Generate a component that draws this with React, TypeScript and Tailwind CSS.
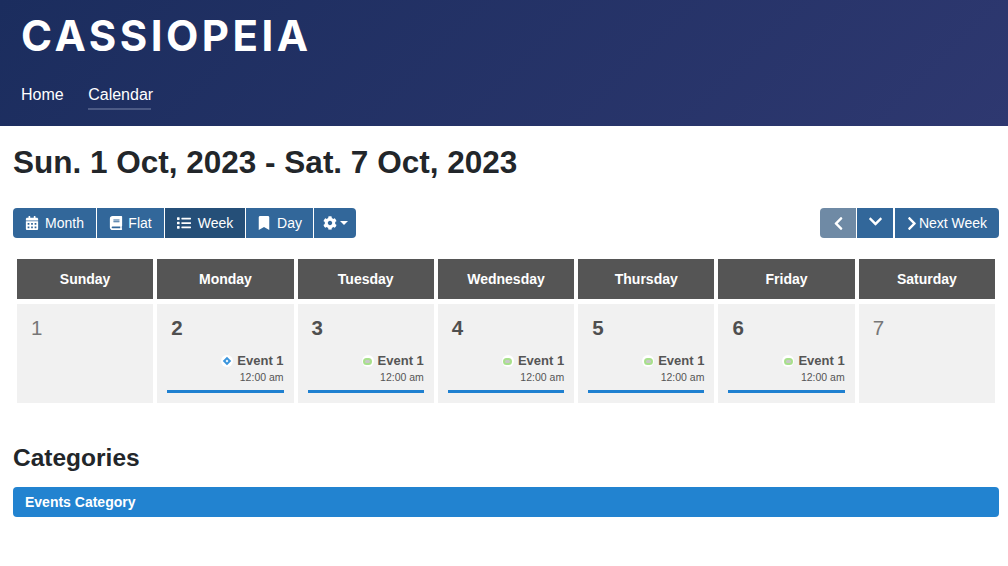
import React from "react";
import { FaBook, FaBookmark, FaCalendarAlt, FaChevronDown, FaChevronLeft, FaChevronRight, FaCog, FaList } from "react-icons/fa";

const headers = ["Sunday", "Monday", "Tuesday", "Wednesday", "Thursday", "Friday", "Saturday"];

const days = [
  { day: 1 },
  { day: 2, dot: "blue" },
  { day: 3, dot: "green" },
  { day: 4, dot: "green" },
  { day: 5, dot: "green" },
  { day: 6, dot: "green" },
  { day: 7 },
];

const views = [
  { label: "Month", icon: <FaCalendarAlt className="text-[14px]" />, active: false, w: "w-[83px] gap-[6px]" },
  { label: "Flat", icon: <FaBook className="text-[14px]" />, active: false, w: "w-[67px] gap-[5px]" },
  { label: "Week", icon: <FaList className="text-[14px]" />, active: true, w: "w-[80px] gap-[7px]" },
  { label: "Day", icon: <FaBookmark className="text-[14px]" />, active: false, w: "w-[67px] gap-[6px]" },
];

const App: React.FC = () => {
  return (
    <div className="min-h-[566px] bg-white font-['Liberation_Sans',Arial,sans-serif] text-[#22262a]">
      <header className="h-[126px] bg-[linear-gradient(135deg,#1b2d5e,#2e3870)] px-[21px] pt-[11px] text-white">
        <div className="font-['Inter',sans-serif] text-[42px] font-bold leading-[50px] tracking-[3.5px]">CASSIOPEIA</div>
        <nav className="mt-[22px] flex gap-[24.5px] text-[16px] leading-[24px]">
          <a href="#">Home</a>
          <a href="#" className="relative">
            Calendar
            <span className="absolute -bottom-[3px] left-0 h-[2px] w-[63px] bg-[#4c5a85]" />
          </a>
        </nav>
      </header>

      <main className="pl-[13px] pr-[9px]">
        <h1 className="mt-[16px] text-[31.5px] font-bold leading-[40px]">Sun. 1 Oct, 2023 - Sat. 7 Oct, 2023</h1>

        <div className="mt-[26px] flex items-center justify-between text-[14px] text-white">
          <div className="flex h-[30px] gap-px">
            {views.map((v, i) => (
              <button
                key={v.label}
                type="button"
                className={`flex ${v.w} items-center justify-center ${v.active ? "bg-[#254f78]" : "bg-[#32679a]"} ${i === 0 ? "rounded-l-[4px]" : ""}`}
              >
                {v.icon}
                <span>{v.label}</span>
              </button>
            ))}
            <button type="button" className="flex w-[42px] items-center justify-center gap-[3px] rounded-r-[4px] bg-[#32679a]">
              <FaCog className="text-[14px]" />
              <span className="h-0 w-0 border-x-[4px] border-t-[4px] border-x-transparent border-t-white" />
            </button>
          </div>

          <div className="flex h-[30px]">
            <button type="button" className="flex w-[36px] items-center justify-center rounded-l-[4px] bg-[#6f8aa5]">
              <FaChevronLeft className="text-[15px]" />
            </button>
            <button type="button" className="ml-px flex w-[36px] items-center justify-center bg-[#32679a]">
              <FaChevronDown className="mb-[3px] text-[15px]" />
            </button>
            <button type="button" className="ml-[2px] flex w-[104px] items-center justify-center gap-[2px] rounded-r-[4px] bg-[#32679a]">
              <FaChevronRight className="w-[10px] text-[15px]" />
              <span>Next Week</span>
            </button>
          </div>
        </div>

        <div className="mt-[21px] grid grid-cols-7 gap-x-[4px] gap-y-[5px] px-[4px]">
          {headers.map((h) => (
            <div key={h} className="flex h-[40px] items-center justify-center bg-[#555555] text-[14px] font-bold text-white">
              {h}
            </div>
          ))}
          {days.map(({ day, dot }) => (
            <div key={day} className="h-[99px] bg-[#f1f1f1] px-[10px]">
              <div className={`pl-[4px] pt-[12px] text-[20.5px] leading-[24px] ${dot ? "font-bold text-[#4f4f4f]" : "text-[#777777]"}`}>{day}</div>
              {dot && (
                <>
                  <div className="mt-[12px] flex items-center justify-end gap-[4px] text-[13px] font-bold leading-[18px] text-[#555555]">
                    <span className="flex h-[12px] w-[12px] items-center justify-center rounded-full bg-white">
                      {dot === "blue" ? (
                        <span className="h-[6px] w-[6px] rotate-45 border-2 border-[#3a95dd]" />
                      ) : (
                        <span className="h-[7px] w-[9px] rounded-full border-2 border-[#a8e08c] bg-[#c8c8c8]" />
                      )}
                    </span>
                    <span>Event 1</span>
                  </div>
                  <div className="text-right text-[10.5px] leading-[15px] text-[#555555]">12:00 am</div>
                  <div className="mt-[5px] h-[3px] bg-[#1f80d0]" />
                </>
              )}
            </div>
          ))}
        </div>

        <h2 className="mt-[39px] text-[24.5px] font-bold leading-[32px]">Categories</h2>
        <div className="mt-[13px] flex h-[30px] items-center rounded-[4px] bg-[#2283d0] px-[12px] text-[14px] font-bold text-white">Events Category</div>
      </main>
    </div>
  );
};

export default App;
